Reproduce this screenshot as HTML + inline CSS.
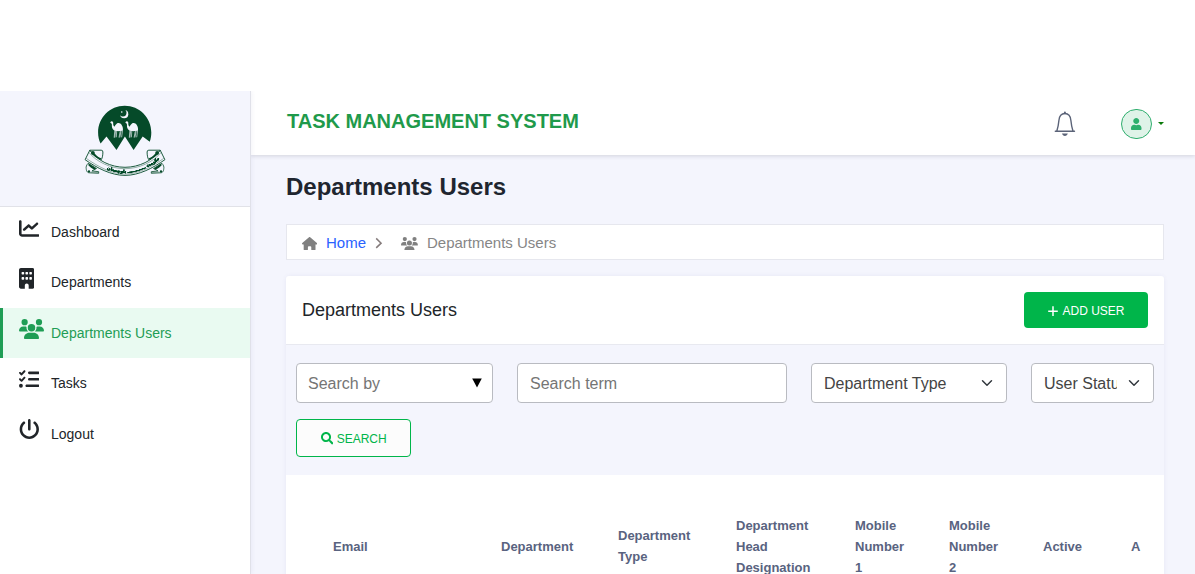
<!DOCTYPE html>
<html lang="en">
<head>
<meta charset="utf-8">
<title>Departments Users</title>
<style>
*{box-sizing:border-box;margin:0;padding:0}
html,body{width:1195px;height:574px;overflow:hidden;background:#fff}
body{font-family:"Liberation Sans",Arial,sans-serif;color:#212529;position:relative}
.abs{position:absolute}
#page{position:absolute;left:0;top:91px;width:1195px;height:483px;background:#f4f5fd;overflow:hidden}
#sidebar{position:absolute;left:0;top:0;width:251px;height:483px;background:#fff;border-right:1px solid #e0e1e9;box-shadow:1px 0 4px rgba(90,90,150,.07);z-index:2}
#logo{position:absolute;left:0;top:0;width:250px;height:116px;background:#f4f5fd;border-bottom:1px solid #e1e2e8}
.nav{position:absolute;left:0;top:116px;width:250px;list-style:none}
.nav li{height:50.4px;position:relative;font-size:14px;line-height:51.200px;color:#212529;padding-left:51px;white-space:nowrap}
.nav li svg{position:absolute;left:19px;top:11.500px}
.nav li.active{background:#e9faf1;color:#1f9d55;border-left:3px solid #1f9d55;padding-left:48px}
.nav li.active svg{left:16px}
#header{position:absolute;left:251px;top:0;width:944px;height:64px;background:#fff;box-shadow:0 1px 4px rgba(40,40,60,.17)}
#brand{position:absolute;left:36px;top:0;line-height:60px;font-size:20px;font-weight:bold;color:#1f9a4b;white-space:nowrap}
h1{position:absolute;left:286px;top:82px;font-size:24px;font-weight:bold;line-height:28px;color:#20252f;white-space:nowrap}
#crumb{position:absolute;left:286px;top:133px;width:878px;height:36px;background:#fff;border:1px solid #e6e7ee;font-size:15px;line-height:34px;white-space:nowrap}
#card{position:absolute;left:286px;top:185px;width:878px;height:400px;background:#fff;border-radius:3px;box-shadow:0 0 4px rgba(90,90,150,.08)}
#cardtitle{position:absolute;left:16px;top:0;font-size:18px;line-height:68px;color:#212529;white-space:nowrap}
#filters{position:absolute;left:0;top:68px;width:878px;height:131px;background:#f4f5fd;border-top:1px solid #e8e9f0}
.ctl{position:absolute;top:18px;height:40px;background:#fff;border:1px solid #b9bbc1;border-radius:4px;font-size:16px;line-height:39px;color:#6c757d;padding-left:11px;white-space:nowrap;overflow:hidden}
.btn{position:absolute;font-size:12px;white-space:nowrap;border-radius:3px;text-align:center}
th,.th{font-size:13px;font-weight:bold;color:#596380;line-height:20.800px;position:absolute;white-space:nowrap}
</style>
</head>
<body>
<div id="page">
  <div id="sidebar">
    <div id="logo"><svg class="abs" style="left:0;top:0" width="250" height="116" viewBox="0 91 250 116">
<defs>
<g id="camel">
<path fill="#f4f5fd" d="M0 1.100 C0.300 0.300 1.200 -0.100 2 0.100 C2.700 0.300 2.900 0.900 2.900 1.600 C2.900 2.600 2.900 3.600 3.200 4.300 C3.500 5 4 5.400 4.400 5.300 C4.900 4 5.800 2.700 6.900 2 C7.900 1.400 9.100 1.500 10 2.200 C11.300 3.200 12.200 4.800 12.500 6.500 C12.700 7.600 12.700 8.600 12.500 9.500 L9.800 9.700 C8.500 9.900 7.200 9.900 6 9.700 L4.300 9.400 C3 8.700 2 7.500 1.700 6 C1.500 4.800 1.700 3.400 1.400 2.400 C1.100 2 0.400 1.900 0 1.500 Z"/>
<g stroke="#f4f5fd" stroke-width="0.750" fill="none" opacity="0.850">
<path d="M4.500 9.200 L3.900 16.300"/><path d="M5.300 9.500 L4.500 16.300"/>
<path d="M6.400 9.500 L6 16"/>
<path d="M10 9.500 L8.700 16.200"/><path d="M10.800 9.500 L9.500 16.200"/>
<path d="M12.200 9.300 L11.300 16"/>
</g>
</g>
<filter id="ink" x="-5%" y="-20%" width="110%" height="140%"><feComponentTransfer><feFuncA type="linear" slope="1.500"/></feComponentTransfer></filter>
</defs>
<path fill="#054a29" d="M100.600 143.500 C98.900 140.100 98.100 136.400 98.100 132.400 C98.100 117.700 110 105.800 124.700 105.800 C139.400 105.800 151.300 117.700 151.300 132.400 C151.300 135.700 150.800 138.800 149.700 141.800 L142.700 136.500 L133.600 149.900 L124.900 136.500 L116.500 149.900 L106.500 136.500 Z"/>
<circle cx="124.200" cy="114.200" r="4.100" fill="#f4f5fd"/>
<circle cx="122.900" cy="112.800" r="3.600" fill="#054a29"/>
<circle cx="121.750" cy="112" r="0.800" fill="#f4f5fd"/>
<use href="#camel" x="110.300" y="121.300"/>
<use href="#camel" x="125.400" y="121.300"/>
<g id="ribL">
<path d="M88.100 163.300 C86.500 165 85.800 167 86.200 168.500 C86.300 170 86.600 171.300 87.300 171.900 C88 172.600 88.800 172.800 89.300 172.800 L98.700 173.300 L98.700 171.700 L92 170.900 L96.500 168.500 Z" fill="#f4f5fd" stroke="#054a29" stroke-width="0.800" stroke-linejoin="round"/>
<path d="M88.800 163.500 L96.200 168.600 L94.300 169.800 C92 168.600 90 167 88.300 165.200 Z" fill="#054a29"/>
<circle cx="89" cy="171.500" r="1.150" fill="#054a29"/>
<path d="M90.500 171.900 L98.500 172.500" stroke="#054a29" stroke-width="0.400" fill="none"/>
</g>
<use href="#ribL" transform="translate(250,0) scale(-1,1)"/>
<path d="M89.800 150.200 L85.100 159.700 C97 168 111 175.400 125 175.400 C139 175.400 153 168 164.900 159.700 L160.200 150.200 C153 160.500 139 167.300 125 167.300 C111 167.300 97 160.500 89.800 150.200 Z" fill="#f4f5fd" stroke="#054a29" stroke-width="0.900" stroke-linejoin="round"/>
<path d="M86.300 158.400 C98 166.600 111.500 174 125 174 C138.500 174 152 166.600 163.700 158.400" fill="none" stroke="#054a29" stroke-width="0.400"/>
<path d="M88.900 152.400 C96.500 162 111 168.700 125 168.700 C139 168.700 153.500 162 161.100 152.400" fill="none" stroke="#054a29" stroke-width="0.400"/>
<g id="scrL">
<path d="M89.800 150.200 H101.200 Q102.900 150.200 102.900 152 C102.900 155 102.400 157.600 101.400 159.600 C97.500 157.600 93.500 154.600 89.800 150.200 Z" fill="#f4f5fd" stroke="#054a29" stroke-width="0.900" stroke-linejoin="round"/>
<circle cx="92.900" cy="152.900" r="1.900" fill="#054a29"/>
<path d="M91.500 153.500 C94 156.500 97 158.300 100.600 159.800 L101.100 158.200 C98.500 157.200 96.500 155.800 94.600 153.400 Z" fill="#054a29"/>
</g>
<use href="#scrL" transform="translate(250,0) scale(-1,1)"/>
<path id="rib" d="M84 153.800 C97 166.300 112 172.800 125 172.800 C138 172.800 153 166.300 166 153.800" fill="none"/>
<text font-family="'DejaVu Sans',sans-serif" font-size="4.200" font-weight="bold" fill="#054a29" stroke="#054a29" stroke-width="0.300" filter="url(#ink)" text-anchor="middle"><textPath href="#rib" startOffset="60.500%">حکومت ـــــــــــــ بلوچستان</textPath></text>
</svg></div>
    <ul class="nav">
      <li><svg style="top:12px;left:18.700px" width="20.600" height="18.900" preserveAspectRatio="none" viewBox="0 0 512 512"><path fill="currentColor" d="M64 64c0-17.700-14.300-32-32-32S0 46.300 0 64V400c0 44.200 35.800 80 80 80H480c17.700 0 32-14.300 32-32s-14.300-32-32-32H80c-8.800 0-16-7.200-16-16V64zm406.600 86.600c12.500-12.500 12.500-32.800 0-45.300s-32.800-12.500-45.300 0L320 210.700l-57.400-57.400c-12.500-12.500-32.800-12.500-45.300 0l-112 112c-12.500 12.500-12.500 32.800 0 45.300s32.800 12.500 45.300 0L240 221.300l57.400 57.400c12.500 12.500 32.800 12.500 45.300 0l128-128z"/></svg>Dashboard</li>
      <li><svg style="top:10.800px;left:18.800px" width="15.500" height="20.700" viewBox="0 0 384 512"><path fill="currentColor" d="M48 0C21.500 0 0 21.500 0 48V464c0 26.500 21.500 48 48 48h96V432c0-26.500 21.500-48 48-48s48 21.500 48 48v80h96c26.500 0 48-21.500 48-48V48c0-26.500-21.500-48-48-48H48zM64 240c0-8.800 7.200-16 16-16h32c8.800 0 16 7.200 16 16v32c0 8.800-7.200 16-16 16H80c-8.800 0-16-7.200-16-16V240zm112-16h32c8.800 0 16 7.200 16 16v32c0 8.800-7.200 16-16 16H176c-8.800 0-16-7.200-16-16V240c0-8.800 7.200-16 16-16zm80 16c0-8.800 7.200-16 16-16h32c8.800 0 16 7.200 16 16v32c0 8.800-7.200 16-16 16H272c-8.800 0-16-7.200-16-16V240zM80 96h32c8.800 0 16 7.200 16 16v32c0 8.800-7.200 16-16 16H80c-8.800 0-16-7.200-16-16V112c0-8.800 7.200-16 16-16zm80 16c0-8.800 7.200-16 16-16h32c8.800 0 16 7.200 16 16v32c0 8.800-7.200 16-16 16H176c-8.800 0-16-7.200-16-16V112zM272 96h32c8.800 0 16 7.200 16 16v32c0 8.800-7.200 16-16 16H272c-8.800 0-16-7.200-16-16V112c0-8.800 7.200-16 16-16z"/></svg>Departments</li>
      <li class="active"><svg width="25" height="20" viewBox="0 0 640 512"><path fill="currentColor" d="M144 0a80 80 0 1 1 0 160A80 80 0 1 1 144 0zM512 0a80 80 0 1 1 0 160A80 80 0 1 1 512 0zM0 298.700C0 239.800 47.800 192 106.700 192h42.700c15.900 0 31 3.500 44.600 9.700c-1.300 7.200-1.900 14.700-1.900 22.300c0 38.200 16.800 72.500 43.300 96c-.2 0-.4 0-.7 0H21.300C9.600 320 0 310.400 0 298.700zM405.300 320c-.2 0-.4 0-.7 0c26.600-23.500 43.300-57.800 43.300-96c0-7.600-.7-15-1.900-22.300c13.600-6.300 28.700-9.700 44.600-9.700h42.700C592.200 192 640 239.800 640 298.700c0 11.800-9.600 21.300-21.300 21.300H405.300zM224 224a96 96 0 1 1 192 0 96 96 0 1 1 -192 0zM128 485.300C128 411.700 187.700 352 261.300 352H378.700C452.300 352 512 411.700 512 485.300c0 14.700-11.900 26.700-26.700 26.700H154.700c-14.700 0-26.700-11.900-26.700-26.700z"/></svg>Departments Users</li>
      <li><svg style="top:10.600px;left:18.800px" width="20.600" height="20.600" viewBox="0 0 512 512"><path fill="currentColor" d="M152.100 38.200c9.900 8.900 10.700 24 1.800 33.900l-72 80c-4.400 4.900-10.600 7.800-17.200 7.900s-12.900-2.400-17.600-7L7 113C-2.300 103.600-2.300 88.400 7 79s24.600-9.400 33.900 0l22.100 22.100 55.100-61.200c8.900-9.900 24-10.700 33.900-1.800zm0 160c9.900 8.900 10.700 24 1.800 33.900l-72 80c-4.400 4.900-10.600 7.800-17.200 7.900s-12.900-2.400-17.600-7L7 273c-9.400-9.400-9.400-24.600 0-33.900s24.600-9.400 33.900 0l22.100 22.100 55.100-61.200c8.900-9.900 24-10.700 33.900-1.800zM224 96c0-17.700 14.300-32 32-32H480c17.700 0 32 14.300 32 32s-14.300 32-32 32H256c-17.700 0-32-14.300-32-32zm0 160c0-17.700 14.300-32 32-32H480c17.700 0 32 14.300 32 32s-14.300 32-32 32H256c-17.700 0-32-14.300-32-32zM160 416c0-17.700 14.300-32 32-32H480c17.700 0 32 14.300 32 32s-14.300 32-32 32H192c-17.700 0-32-14.300-32-32zM48 368a48 48 0 1 1 0 96 48 48 0 1 1 0-96z"/></svg>Tasks</li>
      <li><svg style="top:10.500px;left:18.700px" width="20.600" height="20.600" viewBox="0 0 512 512"><path fill="currentColor" d="M288 32c0-17.700-14.300-32-32-32s-32 14.300-32 32V256c0 17.700 14.300 32 32 32s32-14.300 32-32V32zM143.500 120.600c13.600-11.300 15.400-31.500 4.100-45.100s-31.500-15.400-45.100-4.100C49.700 115.400 16 181.800 16 256c0 132.500 107.500 240 240 240s240-107.500 240-240c0-74.200-33.800-140.600-86.600-184.600c-13.600-11.300-33.800-9.500-45.100 4.100s-9.500 33.800 4.100 45.100c38.900 32.300 63.500 81 63.500 135.400c0 97.200-78.800 176-176 176s-176-78.800-176-176c0-54.400 24.700-103.100 63.500-135.400z"/></svg>Logout</li>
    </ul>
  </div>
  <div id="header">
    <div id="brand">TASK MANAGEMENT SYSTEM</div>
<svg class="abs" style="left:801px;top:19.300px" width="26" height="28" viewBox="0 0 26 28" fill="none" stroke="#5b6378" stroke-width="1.400" stroke-linecap="round" stroke-linejoin="round">
<path d="M3.300 21.200 H22.500 M4.900 20.800 C6.200 17 6.600 13.500 6.900 10.500 C7.300 6.100 9.600 3.500 12.900 3.500 C16.200 3.500 18.500 6.100 18.900 10.500 C19.200 13.500 19.600 17 20.900 20.800"/>
<path d="M12.900 3.300 V2.400" stroke-width="2"/>
<path d="M10 23.600 H15.800 C15.400 25.200 14.300 26 12.900 26 C11.500 26 10.400 25.200 10 23.600 Z" fill="#5b6378" stroke="none"/>
</svg>
<div class="abs" style="left:870.200px;top:17.600px;width:30.400px;height:30.400px;border-radius:50%;background:#dff3e8;border:1px solid #2fae6e"></div>
<svg class="abs" style="left:880.100px;top:26.900px" width="10.500" height="12" viewBox="0 0 448 512"><path fill="#2eaf6d" d="M224 256c70.700 0 128-57.300 128-128S294.700 0 224 0 96 57.300 96 128s57.300 128 128 128zm89.600 32h-16.700c-22.200 10.200-46.900 16-72.900 16s-50.600-5.800-72.900-16h-16.700C60.200 288 0 348.200 0 422.400V464c0 26.500 21.500 48 48 48h352c26.500 0 48-21.500 48-48v-41.600c0-74.200-60.200-134.400-134.400-134.400z"/></svg>
<div class="abs" style="left:907px;top:31px;width:0;height:0;border-left:3px solid transparent;border-right:3px solid transparent;border-top:3.200px solid #0a7a0a"></div>
  </div>
  <h1>Departments Users</h1>
  <div id="crumb">
<svg class="abs" style="left:14.900px;top:11.700px" width="15.200" height="13.500" viewBox="0 0 576 512"><path fill="#808080" d="M575.800 255.500c0 18-15 32.100-32 32.100h-32l.7 160.200c0 2.700-.2 5.400-.5 8.100V472c0 22.100-17.900 40-40 40H456c-1.100 0-2.200 0-3.300-.1c-1.400 .1-2.800 .1-4.200 .1H416 392c-22.100 0-40-17.900-40-40V448 384c0-17.700-14.300-32-32-32H256c-17.700 0-32 14.300-32 32v64 24c0 22.100-17.900 40-40 40H160 128.100c-1.500 0-3-.1-4.500-.2c-1.200 .1-2.400 .2-3.600 .2H104c-22.100 0-40-17.900-40-40V360c0-.9 0-1.900 .1-2.800V287.600H32c-18 0-32-14-32-32.100c0-9 3-17 10-24L266.400 8c7-7 15-8 22-8s15 2 21 7L564.800 231.500c8 7 12 15 11 24z"/></svg>
<svg class="abs" style="left:87.700px;top:11.700px" width="8" height="12.400" viewBox="0 0 8 12.400" fill="none" stroke="#857c7c" stroke-width="1.500"><path d="M1.200 1.400 L6.100 6.150 L1.200 10.900"/></svg>
<svg class="abs" style="left:114px;top:11.700px" width="16.900" height="13.500" viewBox="0 0 640 512"><path fill="#808080" d="M144 0a80 80 0 1 1 0 160A80 80 0 1 1 144 0zM512 0a80 80 0 1 1 0 160A80 80 0 1 1 512 0zM0 298.700C0 239.800 47.800 192 106.700 192h42.700c15.900 0 31 3.500 44.600 9.700c-1.300 7.200-1.900 14.700-1.900 22.300c0 38.200 16.800 72.500 43.300 96c-.2 0-.4 0-.7 0H21.300C9.600 320 0 310.400 0 298.700zM405.300 320c-.2 0-.4 0-.7 0c26.600-23.500 43.300-57.800 43.300-96c0-7.600-.7-15-1.900-22.300c13.600-6.300 28.700-9.700 44.600-9.700h42.700C592.200 192 640 239.800 640 298.700c0 11.800-9.600 21.300-21.300 21.300H405.300zM224 224a96 96 0 1 1 192 0 96 96 0 1 1 -192 0zM128 485.300C128 411.700 187.700 352 261.300 352H378.700C452.300 352 512 411.700 512 485.300c0 14.700-11.900 26.700-26.700 26.700H154.700c-14.700 0-26.700-11.900-26.700-26.700z"/></svg>
<span class="abs" style="left:39px;top:1px;color:#2962ff">Home</span>
    <span class="abs" style="left:140px;top:1px;color:#868686">Departments Users</span>
  </div>
  <div id="card">
    <div id="cardtitle">Departments Users</div>
    <div class="btn" style="left:738px;top:16px;width:124px;height:36px;line-height:36px;background:#00b54a;color:#fff;border-radius:4px"><svg class="abs" style="left:24.400px;top:13.700px" width="10" height="10.400" viewBox="0 0 10 10.400" stroke="#fff" stroke-width="1.500" fill="none"><path d="M5 0.200 V10.200 M0.200 5.200 H9.800"/></svg><span class="abs" style="left:38.500px;top:1px">ADD USER</span></div>
    <div id="filters">
      <div class="ctl" style="left:10px;width:197px;color:#757575">Search by<svg class="abs" style="right:10px;top:13.500px" width="10" height="10" viewBox="0 0 10 10"><path d="M0.200 0.500 H9.800 L5 9.500 Z" fill="#000"/></svg></div>
      <div class="ctl" style="left:231px;width:270px;color:#757575;padding-left:12px">Search term</div>
      <div class="ctl" style="left:525px;width:196px;color:#444;padding-left:12px">Department Type<svg class="abs" style="right:11.500px;top:13px" width="16" height="12" viewBox="0 0 16 16"><path fill="none" stroke="#343a40" stroke-linecap="round" stroke-linejoin="round" stroke-width="2" d="m2 5 6 6 6-6"/></svg></div>
      <div class="ctl" style="left:745px;width:123px;color:#444;padding-left:12px"><span style="display:block;width:73px;overflow:hidden">User Status</span><svg class="abs" style="right:11.500px;top:13px" width="16" height="12" viewBox="0 0 16 16"><path fill="none" stroke="#343a40" stroke-linecap="round" stroke-linejoin="round" stroke-width="2" d="m2 5 6 6 6-6"/></svg></div>
      <div class="btn" style="left:10px;top:74px;width:115px;height:38px;line-height:36px;border:1px solid #00b54a;color:#00b54a;background:#fcfcfc;border-radius:4px"><svg class="abs" style="left:24.100px;top:12.400px" width="12.400" height="12.400" viewBox="0 0 512 512"><path fill="#00b54a" d="M505 442.700L405.300 343c-4.500-4.500-10.600-7-17-7H372c27.600-35.300 44-79.700 44-128C416 93.100 322.900 0 208 0S0 93.100 0 208s93.100 208 208 208c48.300 0 92.700-16.400 128-44v16.300c0 6.400 2.500 12.500 7 17l99.700 99.700c9.400 9.400 24.600 9.400 33.900 0l28.300-28.300c9.400-9.400 9.400-24.600.1-34zM208 336c-70.700 0-128-57.200-128-128 0-70.700 57.200-128 128-128 70.700 0 128 57.200 128 128 0 70.700-57.200 128-128 128z"/></svg><span class="abs" style="left:39.700px;top:0.500px">SEARCH</span></div>
    </div>
    <div class="th" style="left:47px;top:260.800px">Email</div>
    <div class="th" style="left:215px;top:260.800px">Department</div>
    <div class="th" style="left:332px;top:250.400px">Department<br>Type</div>
    <div class="th" style="left:450px;top:240px">Department<br>Head<br>Designation</div>
    <div class="th" style="left:569px;top:240px">Mobile<br>Number<br>1</div>
    <div class="th" style="left:663px;top:240px">Mobile<br>Number<br>2</div>
    <div class="th" style="left:757px;top:260.800px">Active</div>
    <div class="th" style="left:845px;top:260.800px">A</div>
  </div>
</div>
</body>
</html>
